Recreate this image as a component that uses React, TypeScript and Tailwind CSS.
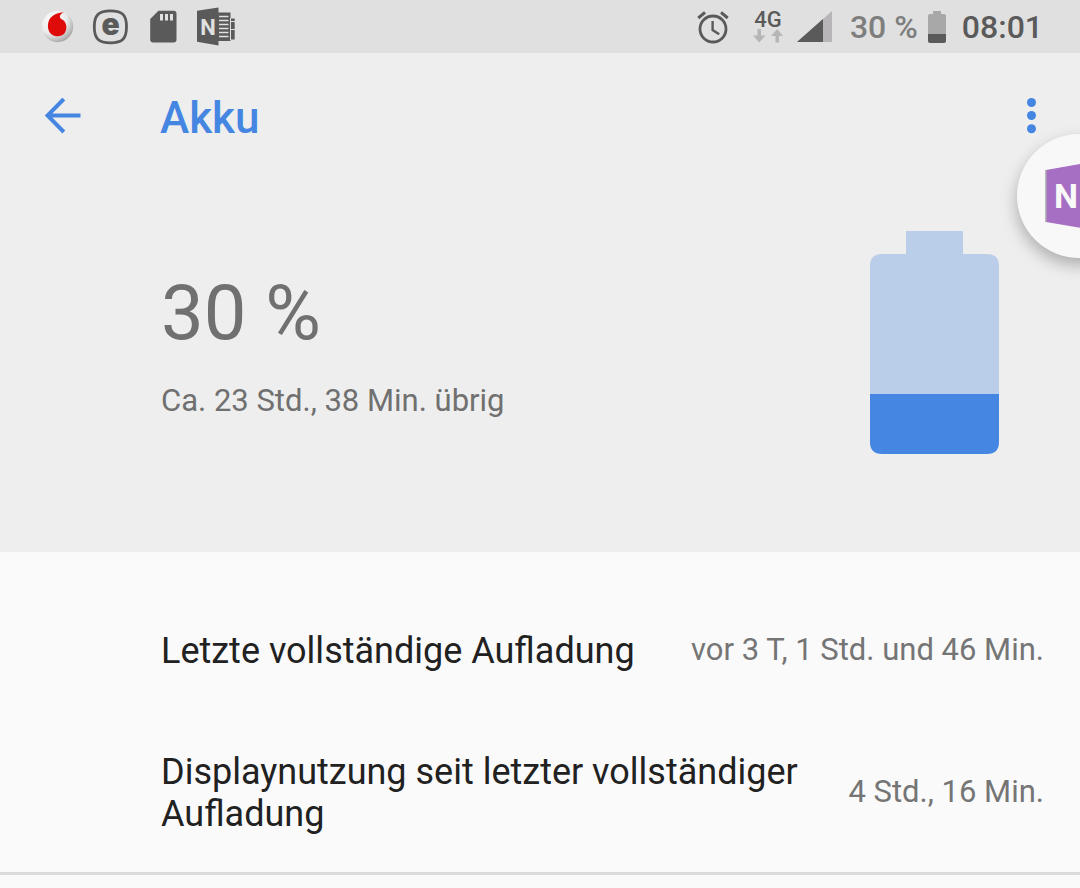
import React from "react";

function VodafoneIcon() {
  return (
    <svg viewBox="0 0 40 40" className="size-10" role="img" aria-label="Vodafone">
      <defs>
        <radialGradient id="ball" cx="0.35" cy="0.3" r="0.75">
          <stop offset="0" stopColor="#ffffff" />
          <stop offset="0.6" stopColor="#e9e9e9" />
          <stop offset="1" stopColor="#a4a4a4" />
        </radialGradient>
      </defs>
      <circle cx="20.5" cy="19.5" r="15.7" fill="url(#ball)" />
      <path
        d="M27 5.4C21.500 5.100 15.500 7.600 12.500 12.200C9.800 17.500 10.600 24 14.400 27.200C18.500 30.400 24.600 29.800 27.700 26C30.600 21.500 29.600 15.400 26 13C24 12 22.700 11.200 22.900 9.500C23 7.300 24.800 5.900 27 5.400Z"
        fill="#df0a0a"
      />
    </svg>
  );
}

function EsetIcon() {
  return (
    <svg viewBox="0 0 40 40" className="size-10" role="img" aria-label="ESET">
      <path
        d="M20.5 3.800C32.500 3.800 36.500 8 36.500 19.800S32.500 35.800 20.500 35.800S4.300 31.500 4.300 19.800S8.500 3.800 20.500 3.800Z"
        fill="none"
        stroke="#5a5a5a"
        strokeWidth="2.800"
      />
      <text x="20.500" y="28" textAnchor="middle" fontSize="30" className="fill-[#5a5a5a] font-[Inter,sans-serif] font-black">
        e
      </text>
    </svg>
  );
}

function SdCardIcon() {
  return (
    <svg viewBox="0 0 40 40" className="size-10" role="img" aria-label="SD-Karte">
      <path
        fillRule="evenodd"
        d="M15.500 3.800H30.500Q33.500 3.800 33.500 6.800V32.500Q33.500 35.500 30.500 35.500H10.200Q7.200 35.500 7.200 32.500V12.100ZM17 7V13.500H20V7ZM22 7V13.500H25V7ZM27 7V13.500H30V7Z"
        fill="#5a5a5a"
      />
    </svg>
  );
}

function OneNoteIcon() {
  return (
    <svg viewBox="0 0 40 40" className="size-10" role="img" aria-label="OneNote">
      <path d="M22 5.500H34.500V11.500H38.700V32.500H34.500V34H22Z" fill="#5a5a5a" />
      <path
        d="M23 9.500H32.500M23 13.500H32.500M23 17.500H32.500M23 21.500H32.500M23 25.500H32.500M23 29.500H32.500"
        stroke="#e0e0e0"
        strokeWidth="1.500"
      />
      <path d="M34.500 11V33M34.500 14.500H39M34.500 22.500H39" stroke="#e0e0e0" strokeWidth="1" />
      <path d="M1 3.800L22.500 .500V38.500L1 34.800Z" fill="#5a5a5a" />
      <text x="12" y="28" textAnchor="middle" fontSize="22" className="fill-[#e0e0e0] font-bold">
        N
      </text>
    </svg>
  );
}

function AlarmIcon() {
  return (
    <svg viewBox="0 0 32 34" className="h-[34px] w-8" role="img" aria-label="Wecker">
      <g fill="none" stroke="#5a5a5a" strokeWidth="2.800">
        <circle cx="16" cy="19" r="13" />
        <path d="M1.300 8L8 2.300M30.700 8L24 2.300" strokeWidth="3" />
        <path d="M15.600 11V20L22.200 24.200" strokeWidth="2.400" />
      </g>
    </svg>
  );
}

function DataArrows() {
  return (
    <svg viewBox="0 0 30 14" className="h-[14px] w-[30px]" aria-hidden="true">
      <path d="M4.500 0H8V6.500H12.500L6.200 13.500L0 6.500H4.500Z" fill="#b7b5b7" />
      <path d="M22.500 13.500H26V7H30L24.200 0L18 7H22.500Z" fill="#b7b5b7" />
    </svg>
  );
}

function SignalIcon() {
  return (
    <svg viewBox="0 0 36 32" className="h-8 w-9" role="img" aria-label="Signalstärke">
      <path d="M0 31L35 0V31Z" fill="#b7b5b7" />
      <path d="M0 31L26 8V31Z" fill="#5a5a5a" />
    </svg>
  );
}

function SmallBattery() {
  return (
    <svg viewBox="0 0 18 32" className="h-8 w-[18px]" role="img" aria-label="Akkustand">
      <path d="M5 0H13V3H16Q18 3 18 5V23H0V5Q0 3 2 3H5Z" fill="#a8a8a8" />
      <path d="M0 23H18V30Q18 32 16 32H2Q0 32 0 30Z" fill="#5a5a5a" />
    </svg>
  );
}

function StatusBar() {
  return (
    <div className="flex h-[53px] items-center justify-between bg-[#e0e0e0] pr-[37px] pl-[37px] text-[32px] leading-none text-[#5a5a5a]">
      <div className="flex items-center gap-[13px]">
        <VodafoneIcon />
        <EsetIcon />
        <SdCardIcon />
        <OneNoteIcon />
      </div>
      <div className="flex items-center">
        <AlarmIcon />
        <div className="ml-6 flex flex-col items-center">
          <span className="text-[22px] leading-[18px] font-medium">4G</span>
          <DataArrows />
        </div>
        <div className="ml-[14px]">
          <SignalIcon />
        </div>
        <span className="ml-[17px] font-medium text-[#7e7e7e]">30 %</span>
        <div className="ml-[10px]">
          <SmallBattery />
        </div>
        <span className="ml-4 font-medium">08:01</span>
      </div>
    </div>
  );
}

function LargeBattery() {
  return (
    <svg viewBox="0 0 129 223" className="h-[223px] w-[129px]" role="img" aria-label="30 %">
      <path d="M36 0H93V23H117Q129 23 129 35V163H0V35Q0 23 12 23H36Z" fill="#bacee9" />
      <path d="M0 163H129V211Q129 223 117 223H12Q0 223 0 211Z" fill="#4586e2" />
    </svg>
  );
}

function OneNoteBubble() {
  return (
    <button
      type="button"
      aria-label="OneNote"
      className="absolute top-[134px] -right-[61px] size-[124px] rounded-full bg-[#f8f8f8] shadow-[0_7px_16px_rgba(0,0,0,0.28)]"
    >
      <svg viewBox="0 0 124 124" className="size-full" aria-hidden="true">
        <path d="M29 36L71 28.500V95L29 88Z" fill="#a66fc4" />
        <path d="M29 36V88" stroke="#aaa2ad" strokeWidth="1.500" />
        <text x="37" y="74" fontSize="34" className="fill-[#f8f8f8] font-bold">
          N
        </text>
      </svg>
    </button>
  );
}

function StatRow({ label, value }: { label: string; value: string }) {
  return (
    <div className="flex items-center justify-between gap-8">
      <dt className="text-[36px] leading-[42px] text-[#212121]">{label}</dt>
      <dd className="shrink-0 pb-[2px] text-[31px] leading-[40px] text-[#757575]">{value}</dd>
    </div>
  );
}

export default function App() {
  return (
    <div className="relative min-h-screen overflow-hidden bg-[#fafafa] font-[Roboto,sans-serif]">
      <StatusBar />
      <div className="bg-[#eeeeee] pb-[98px]">
        <header className="flex h-[126px] items-center pr-[39px] pl-[45px] text-[#4586e2]">
          <button type="button" aria-label="Zurück" className="mr-[79px]">
            <svg viewBox="0 0 36 36" className="size-9" aria-hidden="true">
              <path d="M18.800 1L2.500 17.500L18.800 34M3 17.500H35.500" fill="none" stroke="currentColor" strokeWidth="4" />
            </svg>
          </button>
          <h1 className="flex-1 pt-1 text-[44px] leading-[54px] font-medium">Akku</h1>
          <button type="button" aria-label="Weitere Optionen">
            <svg viewBox="0 0 20 36" className="h-9 w-5" aria-hidden="true">
              <circle cx="10.500" cy="4.500" r="4.500" fill="currentColor" />
              <circle cx="10.500" cy="17.500" r="4.500" fill="currentColor" />
              <circle cx="10.500" cy="30.800" r="4.500" fill="currentColor" />
            </svg>
          </button>
        </header>
        <section className="flex items-start justify-between pt-[52px] pr-[81px] pl-[161px] text-[#707070]">
          <div className="pt-[37px]">
            <p className="text-[76px] leading-[90px]">30 %</p>
            <p className="mt-[23px] text-[31px] leading-[40px]">Ca. 23 Std., 38 Min. übrig</p>
          </div>
          <LargeBattery />
        </section>
      </div>
      <dl className="flex flex-col gap-[79px] border-b-[3px] border-[#dbdbdb] pt-[78px] pr-9 pb-[37px] pl-[161px]">
        <StatRow label="Letzte vollständige Aufladung" value="vor 3 T, 1 Std. und 46 Min." />
        <StatRow label="Displaynutzung seit letzter vollständiger Aufladung" value="4 Std., 16 Min." />
      </dl>
      <OneNoteBubble />
    </div>
  );
}
